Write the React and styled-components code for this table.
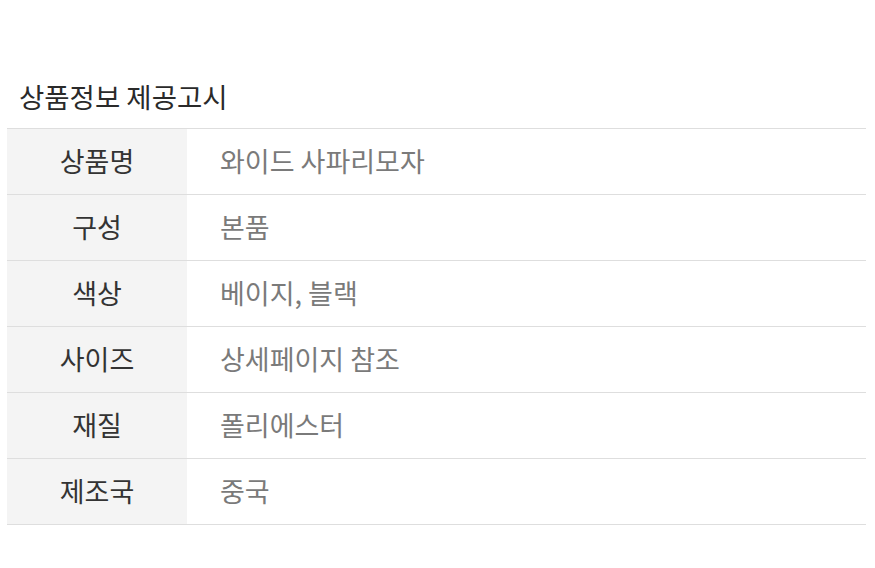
import styled, { createGlobalStyle } from "styled-components";

const GlobalStyle = createGlobalStyle`
  body {
    margin: 0;
    background: #fff;
    font-family: "Noto Sans CJK KR", "Noto Sans", sans-serif;
  }
`;

const rows = [
  ["상품명", "와이드 사파리모자"],
  ["구성", "본품"],
  ["색상", "베이지, 블랙"],
  ["사이즈", "상세페이지 참조"],
  ["재질", "폴리에스터"],
  ["제조국", "중국"],
];

const Wrap = styled.div`
  padding: 78px 9px 0 7px;
`;

const Title = styled.h2`
  margin: 0;
  padding-left: 12px;
  height: 50px;
  font-size: 27.5px;
  font-weight: 400;
  line-height: 36px;
  color: #2a2a2a;
`;

const Table = styled.div`
  border-top: 1px solid #dedede;
`;

const Row = styled.div`
  display: grid;
  grid-template-columns: 180px 1fr;
  height: 65px;
  border-bottom: 1px solid #dedede;
`;

const Cell = styled.div`
  display: flex;
  align-items: center;
  font-size: 27px;
  line-height: 1;
  padding-bottom: 3px;
`;

const Label = styled(Cell)`
  background: #f4f4f4;
  justify-content: center;
  color: #333;
`;

const Value = styled(Cell)`
  padding-left: 33px;
  color: #7a7a7a;
`;

export default function App() {
  return (
    <>
      <GlobalStyle />
      <Wrap>
        <Title>상품정보 제공고시</Title>
        <Table>
          {rows.map(([k, v]) => (
            <Row key={k}>
              <Label>{k}</Label>
              <Value>{v}</Value>
            </Row>
          ))}
        </Table>
      </Wrap>
    </>
  );
}
